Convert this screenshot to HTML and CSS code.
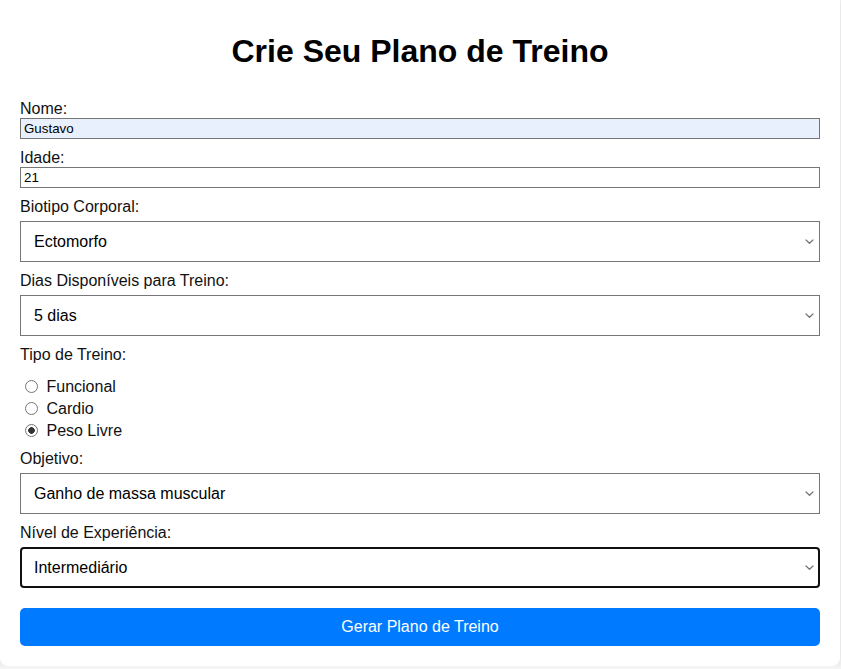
FILE: index.html
```html
<!DOCTYPE html>
<html lang="pt-BR">
<head>
<meta charset="utf-8">
<title>Crie Seu Plano de Treino</title>
<link rel="stylesheet" href="styles.css">
</head>
<body>
<div class="container">
  <h1 class="title">Crie Seu Plano de Treino</h1>
  <form class="form">
    <label class="field-label first" for="nome">Nome:</label>
    <input class="text-input autofill" type="text" id="nome" value="Gustavo">

    <label class="field-label" for="idade">Idade:</label>
    <input class="text-input" type="number" id="idade" value="21">

    <label class="field-label" for="biotipo">Biotipo Corporal:</label>
    <div class="select-wrap">
      <select class="select" id="biotipo">
        <option>Ectomorfo</option>
        <option>Mesomorfo</option>
        <option>Endomorfo</option>
      </select>
      <svg class="chevron" width="9" height="5" viewBox="0 0 9 5"><polyline points="0.6,0.6 4.5,4.3 8.4,0.6" fill="none" stroke="#707070" stroke-width="1.3"/></svg>
    </div>

    <label class="field-label" for="dias">Dias Disponíveis para Treino:</label>
    <div class="select-wrap">
      <select class="select" id="dias">
        <option>5 dias</option>
      </select>
      <svg class="chevron" width="9" height="5" viewBox="0 0 9 5"><polyline points="0.6,0.6 4.5,4.3 8.4,0.6" fill="none" stroke="#707070" stroke-width="1.3"/></svg>
    </div>

    <label class="field-label">Tipo de Treino:</label>
    <div class="radio-group">
      <div class="radio-row"><input class="radio" type="radio" name="tipo" id="r1"> <label for="r1">Funcional</label></div>
      <div class="radio-row"><input class="radio" type="radio" name="tipo" id="r2"> <label for="r2">Cardio</label></div>
      <div class="radio-row"><input class="radio" type="radio" name="tipo" id="r3" checked> <label for="r3">Peso Livre</label></div>
    </div>

    <label class="field-label" for="objetivo">Objetivo:</label>
    <div class="select-wrap">
      <select class="select" id="objetivo">
        <option>Ganho de massa muscular</option>
      </select>
      <svg class="chevron" width="9" height="5" viewBox="0 0 9 5"><polyline points="0.6,0.6 4.5,4.3 8.4,0.6" fill="none" stroke="#707070" stroke-width="1.3"/></svg>
    </div>

    <label class="field-label" for="nivel">Nível de Experiência:</label>
    <div class="select-wrap">
      <select class="select focused" id="nivel">
        <option>Intermediário</option>
      </select>
      <svg class="chevron" width="9" height="5" viewBox="0 0 9 5"><polyline points="0.6,0.6 4.5,4.3 8.4,0.6" fill="none" stroke="#707070" stroke-width="1.3"/></svg>
    </div>

    <button class="submit" type="button">Gerar Plano de Treino</button>
  </form>
</div>
</body>
</html>
```
FILE: styles.css
```css
html, body {
  margin: 0;
  padding: 0;
}
body {
  background: #f4f4f4;
  font-family: "Liberation Sans", Arial, sans-serif;
  color: #000;
}
.container {
  width: 800px;
  padding: 33px 20px 20px;
  background: #fff;
  border-radius: 0 0 8px 8px;
  box-shadow: 0 0 10px rgba(0, 0, 0, 0.1);
}
.title {
  margin: 0 0 31px;
  font-size: 32px;
  font-weight: bold;
  text-align: center;
  line-height: 36px;
}
.form {
  display: flex;
  flex-direction: column;
}
.field-label {
  display: block;
  font-size: 16px;
  line-height: 18px;
  margin-top: 10px;
  margin-bottom: 5px;
  color: #111;
}
.field-label.first {
  margin-top: 0;
}
.text-input {
  box-sizing: border-box;
  width: 800px;
  height: 21px;
  margin: -5px 0 0;
  padding: 1px 3px;
  border: 1px solid #767676;
  border-radius: 0;
  font-family: "Liberation Sans", Arial, sans-serif;
  font-size: 13.333px;
  color: #000;
  background: #fff;
  outline: none;
}
.text-input.autofill {
  background: #e8f0fe;
}
.text-input::-webkit-inner-spin-button,
.text-input::-webkit-outer-spin-button {
  -webkit-appearance: none;
  margin: 0;
}
.select-wrap {
  position: relative;
  width: 800px;
  height: 41px;
}
.select {
  -webkit-appearance: none;
  appearance: none;
  box-sizing: border-box;
  width: 800px;
  height: 41px;
  margin: 0;
  padding: 10px 24px 10px 13px;
  border: 1px solid #767676;
  border-radius: 0;
  font-family: "Liberation Sans", Arial, sans-serif;
  font-size: 16px;
  color: #000;
  background: #fff;
  outline: none;
}
.select.focused {
  border: 2px solid #101010;
  border-radius: 4px;
  padding: 9px 23px 9px 12px;
}
.chevron {
  position: absolute;
  right: 6px;
  top: 18px;
  pointer-events: none;
}
.radio-group {
  display: flex;
  flex-direction: column;
  gap: 4px;
  margin: 8px 0 1px;
}
.radio-row {
  font-size: 16px;
  line-height: 18px;
  height: 18px;
  color: #111;
}
.radio {
  -webkit-appearance: none;
  appearance: none;
  box-sizing: border-box;
  margin: 3px 4px 0 5px;
  width: 13px;
  height: 13px;
  border: 1px solid #767676;
  border-radius: 50%;
  background: #fff;
  vertical-align: -1px;
}
.radio:checked {
  background: radial-gradient(circle, #333 0, #333 3px, #fff 3.6px);
}
.submit {
  margin-top: 20px;
  height: 38px;
  width: 800px;
  padding: 10px;
  border: none;
  border-radius: 5px;
  background: #007bff;
  color: #fff;
  font-family: "Liberation Sans", Arial, sans-serif;
  font-size: 16px;
  line-height: 18px;
  cursor: pointer;
}
```
